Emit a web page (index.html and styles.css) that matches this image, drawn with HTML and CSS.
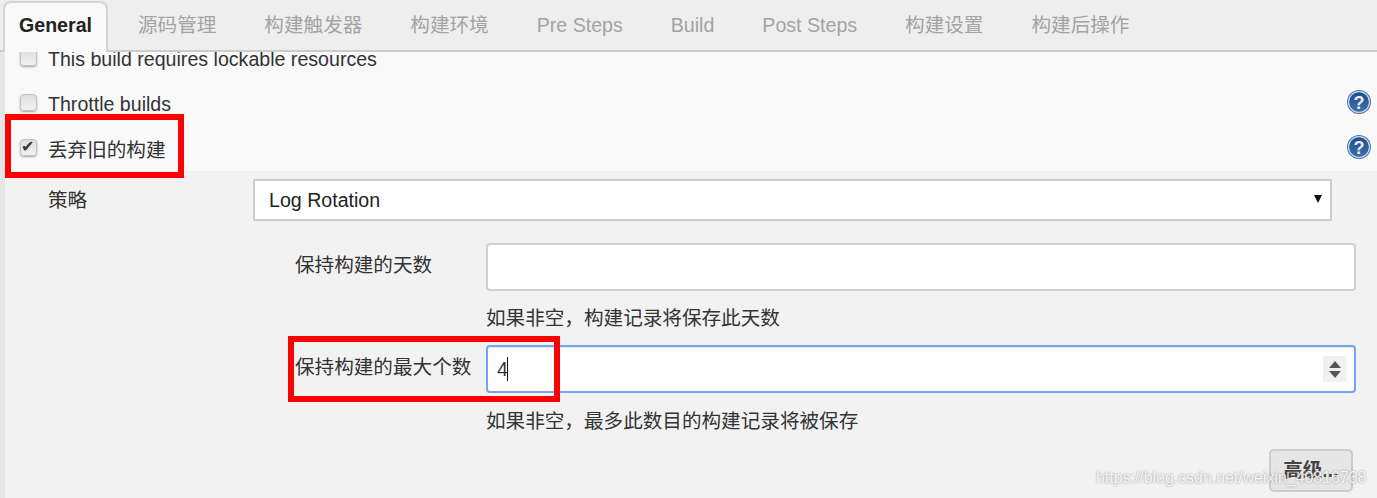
FILE: index.html
```html
<!DOCTYPE html>
<html lang="zh-CN">
<head>
    <meta charset="UTF-8">
    <title>Jenkins General</title>
    <link rel="stylesheet" href="styles.css">
</head>
<body>
    <div id="page">
        <div id="tab-bar">
            <div class="tab active">General</div>
            <div class="tab">源码管理</div>
            <div class="tab">构建触发器</div>
            <div class="tab">构建环境</div>
            <div class="tab">Pre Steps</div>
            <div class="tab">Build</div>
            <div class="tab">Post Steps</div>
            <div class="tab">构建设置</div>
            <div class="tab">构建后操作</div>
        </div>

        <div id="content">
            <div id="options">
                <div class="option first">
                    <input type="checkbox" class="check">
                    <label>This build requires lockable resources</label>
                </div>
                <div class="option">
                    <input type="checkbox" class="check">
                    <label>Throttle builds</label>
                    <svg class="help" viewBox="0 0 24 24">
                        <defs>
                            <linearGradient id="help-fill" x1="0" y1="0" x2="0" y2="1">
                                <stop offset="0" stop-color="#1f4c8a"/>
                                <stop offset="1" stop-color="#3f70ab"/>
                            </linearGradient>
                        </defs>
                        <circle cx="12" cy="12" r="12" fill="#4a76aa"/>
                        <circle cx="12" cy="12" r="10.4" fill="none" stroke="#c9d7e7" stroke-width="1.3"/>
                        <circle cx="12" cy="12" r="9.6" fill="url(#help-fill)"/>
                        <text x="12" y="18.5" text-anchor="middle" class="help-mark">?</text>
                    </svg>
                </div>
                <div class="option">
                    <input type="checkbox" class="check" checked>
                    <label class="label-cjk">丢弃旧的构建</label>
                    <svg class="help" viewBox="0 0 24 24">
                        <circle cx="12" cy="12" r="12" fill="#4a76aa"/>
                        <circle cx="12" cy="12" r="10.4" fill="none" stroke="#c9d7e7" stroke-width="1.3"/>
                        <circle cx="12" cy="12" r="9.6" fill="url(#help-fill)"/>
                        <text x="12" y="18.5" text-anchor="middle" class="help-mark">?</text>
                    </svg>
                </div>
            </div>

            <div id="details">
                <div class="strategy-row">
                    <div class="strategy-label">策略</div>
                    <div class="select-wrap">
                        <select class="strategy-select">
                            <option>Log Rotation</option>
                        </select>
                    </div>
                </div>

                <div class="field">
                    <div class="field-label">保持构建的天数</div>
                    <input type="text" class="field-input">
                </div>
                <div class="field-help first-help">如果非空，构建记录将保存此天数</div>

                <div class="field">
                    <div class="field-label">保持构建的最大个数</div>
                    <div class="input-wrap">
                        <input type="text" class="field-input focused" value="4">
                        <span class="caret"></span>
                        <span class="spinner">
                            <span class="spin-up"></span>
                            <span class="spin-down"></span>
                        </span>
                    </div>
                </div>
                <div class="field-help second-help">如果非空，最多此数目的构建记录将被保存</div>

                <div class="actions">
                    <button class="advanced-btn">高级...</button>
                </div>
            </div>
        </div>

        <div class="red-box box-discard"></div>
        <div class="red-box box-max"></div>
        <div id="watermark">https://blog.csdn.net/weixin_40816738</div>
    </div>
</body>
</html>
```

FILE: styles.css
```css
* {
    box-sizing: border-box;
}

html, body {
    margin: 0;
    height: 498px;
    overflow: hidden;
}

body {
    background-color: #e6e6e6;
    font-family: "Liberation Sans", "Noto Sans CJK SC", sans-serif;
    font-size: 19.6px;
    color: #333333;
}

#page {
    position: relative;
    width: 1377px;
    height: 498px;
    overflow: hidden;
}

/* Tabs */
#tab-bar {
    position: relative;
    z-index: 2;
    display: flex;
    align-items: flex-end;
    gap: 16px;
    height: 52px;
    padding: 1px 0 0 3px;
    background-color: #eeeeee;
    border-bottom: 2px solid #cccccc;
}

.tab {
    height: 49px;
    padding: 0 16px;
    line-height: 48px;
    color: #a3a3a3;
    white-space: nowrap;
}

.tab.active {
    height: 51px;
    margin-bottom: -2px;
    margin-right: -2px;
    background-color: #f9f9f9;
    border: 2px solid #d4d4d4;
    border-bottom: none;
    border-radius: 8px 8px 0 0;
    padding: 0 14px;
    line-height: 44px;
    font-weight: bold;
    color: #222222;
}

/* Content */
#content {
    margin-left: 5px;
}

#options {
    display: flow-root;
    height: 119px;
    background-color: #f9f9f9;
}

.option {
    display: flex;
    align-items: center;
    height: 45px;
    padding: 0 6px 0 15px;
}

.option.first {
    margin-top: -15px;
}

.option label {
    margin-left: 11px;
    margin-top: -1px;
}

.option .label-cjk {
    margin-top: -3px;
}

.check {
    appearance: none;
    position: relative;
    width: 17px;
    height: 17px;
    margin: -4px 0 0 0;
    background: linear-gradient(#dedede, #f2f2f2);
    border: 1px solid #c2c2c2;
    border-radius: 4px;
    box-shadow: 0 1px 2px rgba(0, 0, 0, 0.35);
}

.check:checked::after {
    content: "✔";
    position: absolute;
    top: -3px;
    left: 0;
    font-family: "DejaVu Sans", sans-serif;
    font-size: 16px;
    color: #3c3c3c;
}

.help {
    width: 24px;
    height: 24px;
    margin-left: auto;
    margin-top: -5px;
}

.help-mark {
    font-family: "Liberation Sans", sans-serif;
    font-size: 18px;
    font-weight: bold;
    fill: #e8eef6;
}

#details {
    height: 327px;
    padding-top: 8px;
    background-color: #f2f2f2;
}

.strategy-row {
    display: flex;
    align-items: center;
    padding: 0 45px 0 43px;
}

.strategy-label {
    width: 205px;
    padding-bottom: 4px;
}

.select-wrap {
    position: relative;
    flex: 1;
}

.select-wrap::after {
    content: "";
    position: absolute;
    top: 16px;
    right: 10px;
    border-left: 4.5px solid transparent;
    border-right: 4.5px solid transparent;
    border-top: 8px solid #111111;
}

.strategy-select {
    appearance: none;
    display: block;
    width: 100%;
    height: 42px;
    padding: 0 14px;
    background-color: #ffffff;
    border: 2px solid #cccccc;
    border-radius: 0;
    font: inherit;
    color: #222222;
}

.field {
    display: flex;
    align-items: center;
    padding: 0 21px 0 290px;
}

.field-label {
    width: 191px;
    padding-bottom: 7px;
    white-space: nowrap;
}

.field-input {
    flex: 1;
    display: block;
    width: 100%;
    height: 48px;
    padding: 0 9px;
    background-color: #ffffff;
    border: 2px solid #d0d0d0;
    border-radius: 4px;
    font: inherit;
    color: #333333;
    outline: none;
}

.field-input.focused {
    border-color: #74a4f2;
    box-shadow: inset 0 1px 1px rgba(0, 0, 0, 0.1);
}

.input-wrap {
    position: relative;
    flex: 1;
}

.caret {
    position: absolute;
    top: 12px;
    left: 21px;
    width: 1px;
    height: 24px;
    background-color: #111111;
}

.spinner {
    position: absolute;
    top: 11px;
    right: 10px;
    display: flex;
    flex-direction: column;
    align-items: center;
    justify-content: center;
    gap: 3px;
    width: 23px;
    height: 26px;
    background-color: #f0f0f0;
}

.spin-up {
    border-left: 6px solid transparent;
    border-right: 6px solid transparent;
    border-bottom: 7px solid #555555;
}

.spin-down {
    border-left: 6px solid transparent;
    border-right: 6px solid transparent;
    border-top: 7px solid #555555;
}

.field:nth-of-type(2) {
    margin-top: 22px;
}

.field-help {
    padding-left: 481px;
}

.first-help {
    height: 54px;
    line-height: 54px;
}

.second-help {
    height: 56px;
    line-height: 56px;
}

.actions {
    display: flex;
    justify-content: flex-end;
    padding-right: 24px;
}

.advanced-btn {
    width: 84px;
    height: 43px;
    padding: 0 0 4px;
    background-color: #e6e6e6;
    border: 2px solid #cccccc;
    border-radius: 5px;
    font: inherit;
    font-weight: bold;
    color: #444444;
}

/* Annotations on top of the screenshot */
.red-box {
    position: absolute;
    z-index: 3;
    border: 6px solid #ff0000;
}

.box-discard {
    top: 114px;
    left: 5px;
    width: 179px;
    height: 64px;
}

.box-max {
    top: 336px;
    left: 288px;
    width: 272px;
    height: 66px;
}

#watermark {
    position: absolute;
    z-index: 4;
    top: 469px;
    left: 1096px;
    font-size: 15.9px;
    color: rgba(255, 255, 255, 0.9);
    text-shadow: 0 0 2px rgba(110, 110, 110, 0.8);
    white-space: nowrap;
}
```
